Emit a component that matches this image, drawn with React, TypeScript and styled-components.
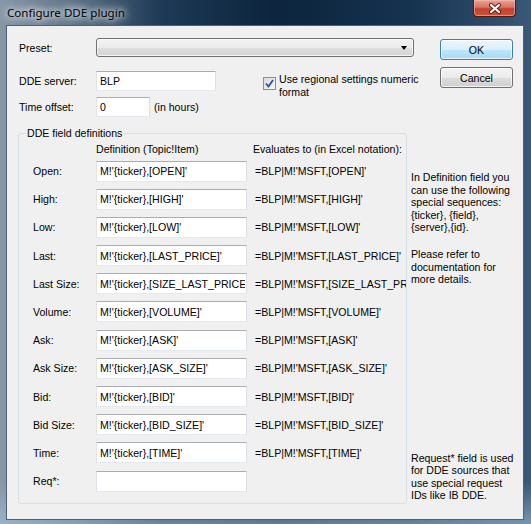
import React from "react";
import styled, { createGlobalStyle } from "styled-components";

const GlobalStyle = createGlobalStyle`
  html, body {
    margin: 0;
    padding: 0;
    background: #1b3550;
  }
  body {
    font-family: "Liberation Sans", Arial, sans-serif;
    font-size: 10.6px;
    color: #000;
  }
`;

const Window = styled.div`
  width: 531px;
  height: 524px;
  display: flex;
  flex-direction: column;
  overflow: hidden;
  background:
    linear-gradient(180deg, rgba(255, 255, 255, 0) 92%, rgba(170, 200, 225, 0.55) 100%),
    linear-gradient(90deg, #8797a6 0%, #5d7286 14%, #1e3a56 30%, #0c243d 52%, #163350 78%, #3a5877 100%);
`;

const TitleBar = styled.div`
  height: 25px;
  flex: 0 0 25px;
  display: flex;
  justify-content: space-between;
  align-items: flex-start;
  padding-left: 7px;
`;

const TitleText = styled.span`
  font-family: "Noto Sans", "Open Sans", sans-serif;
  font-size: 11.6px;
  line-height: 25px;
  color: #000;
  text-shadow: 0 0 6px #fff, 0 0 10px rgba(255, 255, 255, 0.9), 0 0 14px rgba(255, 255, 255, 0.8);
`;

const CloseButton = styled.div`
  width: 43px;
  height: 17px;
  margin-right: 15px;
  box-sizing: border-box;
  border: 1px solid #4b1b14;
  border-top: none;
  border-radius: 0 0 4px 4px;
  background: linear-gradient(180deg, #e7a496 0%, #d8735f 45%, #c2412a 55%, #c9553c 100%);
  box-shadow: inset 0 0 0 1px rgba(255, 200, 190, 0.5);
  display: flex;
  align-items: center;
  justify-content: center;
`;

const Client = styled.div`
  flex: 1;
  margin: 0 7px 4px 6px;
  border: 1px solid #4d6178;
  background: #f0f0f0;
  padding: 12px 0 0 12px;
  display: flex;
  flex-direction: column;
`;

const TopArea = styled.div`
  display: flex;
  align-items: flex-start;
`;

const LeftForm = styled.div`
  width: 395px;
  display: flex;
  flex-direction: column;
`;

const FormRow = styled.div<{ $h: number; $top: number }>`
  display: flex;
  align-items: center;
  height: ${(p) => p.$h}px;
  margin-top: ${(p) => p.$top}px;
`;

const Label = styled.span<{ $w?: number }>`
  width: ${(p) => p.$w ?? 77}px;
  flex: 0 0 auto;
  white-space: nowrap;
`;

const TextBox = styled.input<{ $w: number }>`
  width: ${(p) => p.$w}px;
  height: 100%;
  box-sizing: border-box;
  margin: 0;
  padding: 0 1px 0 3px;
  border: 1px solid;
  border-color: #abadb3 #dbdfe6 #e3e9ef #e2e3ea;
  background: #fff;
  font-family: "Liberation Sans", Arial, sans-serif;
  font-size: 10.6px;
  color: #000;
  outline: none;
`;

const Combo = styled.div`
  width: 318px;
  height: 19px;
  box-sizing: border-box;
  border: 1px solid #707070;
  border-radius: 3px;
  background: linear-gradient(180deg, #f3f3f3 0%, #ebebeb 50%, #dfdfdf 51%, #d4d4d4 100%);
  box-shadow: inset 0 0 0 1px rgba(255, 255, 255, 0.7);
  display: flex;
  align-items: center;
  justify-content: flex-end;
  padding-right: 6px;
`;

const Arrow = styled.div`
  width: 0;
  height: 0;
  border-left: 3.5px solid transparent;
  border-right: 3.5px solid transparent;
  border-top: 4px solid #000;
`;

const CheckGroup = styled.div`
  display: flex;
  align-items: flex-start;
  align-self: flex-start;
  margin-top: 2px;
  margin-left: 47px;
`;

const CheckBox = styled.div`
  width: 13px;
  height: 13px;
  box-sizing: border-box;
  margin-top: 4px;
  border: 1px solid #8f8f8f;
  background: linear-gradient(135deg, #dcdcdc 0%, #f6f6f6 100%);
  display: flex;
  align-items: center;
  justify-content: center;
`;

const CheckText = styled.span`
  width: 150px;
  margin-left: 3px;
  line-height: 12.5px;
`;

const Hint = styled.span`
  margin-left: 4px;
`;

const Buttons = styled.div`
  display: flex;
  flex-direction: column;
  gap: 7px;
  margin-left: 26px;
  margin-top: 1px;
`;

const Button = styled.div<{ $default?: boolean }>`
  width: 73px;
  height: 21px;
  box-sizing: border-box;
  border: 1px solid ${(p) => (p.$default ? "#3c7fb1" : "#707070")};
  border-radius: 3px;
  background: ${(p) =>
    p.$default
      ? "linear-gradient(180deg, #eaf6fd 0%, #d9f0fc 50%, #bee6fd 51%, #a7d9f5 100%)"
      : "linear-gradient(180deg, #f2f2f2 0%, #ebebeb 50%, #dddddd 51%, #cfcfcf 100%)"};
  box-shadow: inset 0 0 0 1px rgba(255, 255, 255, 0.75);
  display: flex;
  align-items: center;
  justify-content: center;
`;

const LowerArea = styled.div`
  display: flex;
  align-items: stretch;
`;

const GroupBox = styled.fieldset`
  margin: 10px 0 0 -1px;
  padding: 0;
  width: 389px;
  height: 377px;
  min-width: 0;
  box-sizing: border-box;
  border: 1px solid #d5dfe5;
  border-radius: 3px;
`;

const GroupLegend = styled.legend`
  margin-left: 7px;
  padding: 0 1px;
  line-height: 12px;
`;

const FieldGrid = styled.div`
  display: grid;
  grid-template-columns: 63px 151px minmax(0, 1fr);
  grid-auto-rows: 21px;
  row-gap: 7.2px;
  align-items: center;
  padding-left: 14px;
`;

const HeaderGrid = styled(FieldGrid)`
  grid-auto-rows: 12px;
  margin-top: 4px;
  margin-bottom: 5.5px;
`;

const HeaderCell = styled.span<{ $pad: number }>`
  padding-left: ${(p) => p.$pad}px;
  white-space: nowrap;
  line-height: 12px;
`;

const EvalCell = styled.span`
  padding-left: 8px;
  white-space: nowrap;
  overflow: hidden;
`;

const HelpColumn = styled.div`
  margin-top: 10px;
  margin-left: 4px;
  height: 377px;
  display: flex;
  flex-direction: column;
  padding-bottom: 2px;
  box-sizing: border-box;
`;

const HelpText = styled.p<{ $top?: number }>`
  margin: ${(p) => (p.$top === undefined ? "auto" : `${p.$top}px`)} 0 0 0;
  line-height: 12.6px;
`;

const fields: Array<[string, string, string]> = [
  ["Open:", "M!'{ticker},[OPEN]'", "=BLP|M!'MSFT,[OPEN]'"],
  ["High:", "M!'{ticker},[HIGH]'", "=BLP|M!'MSFT,[HIGH]'"],
  ["Low:", "M!'{ticker},[LOW]'", "=BLP|M!'MSFT,[LOW]'"],
  ["Last:", "M!'{ticker},[LAST_PRICE]'", "=BLP|M!'MSFT,[LAST_PRICE]'"],
  ["Last Size:", "M!'{ticker},[SIZE_LAST_PRICE]'", "=BLP|M!'MSFT,[SIZE_LAST_PRICE]'"],
  ["Volume:", "M!'{ticker},[VOLUME]'", "=BLP|M!'MSFT,[VOLUME]'"],
  ["Ask:", "M!'{ticker},[ASK]'", "=BLP|M!'MSFT,[ASK]'"],
  ["Ask Size:", "M!'{ticker},[ASK_SIZE]'", "=BLP|M!'MSFT,[ASK_SIZE]'"],
  ["Bid:", "M!'{ticker},[BID]'", "=BLP|M!'MSFT,[BID]'"],
  ["Bid Size:", "M!'{ticker},[BID_SIZE]'", "=BLP|M!'MSFT,[BID_SIZE]'"],
  ["Time:", "M!'{ticker},[TIME]'", "=BLP|M!'MSFT,[TIME]'"],
  ["Req*:", "", ""],
];

export default function App() {
  return (
    <>
      <GlobalStyle />
      <Window>
        <TitleBar>
          <TitleText>Configure DDE plugin</TitleText>
          <CloseButton>
            <svg width="14" height="11" viewBox="0 0 14 11">
              <path d="M3 2 L11 9 M11 2 L3 9" stroke="#5a1a12" strokeWidth="4" strokeLinecap="round" />
              <path d="M3 2 L11 9 M11 2 L3 9" stroke="#fff" strokeWidth="2.2" strokeLinecap="round" />
            </svg>
          </CloseButton>
        </TitleBar>
        <Client>
          <TopArea>
            <LeftForm>
              <FormRow $h={19} $top={0}>
                <Label>Preset:</Label>
                <Combo>
                  <Arrow />
                </Combo>
              </FormRow>
              <FormRow $h={20} $top={14}>
                <Label>DDE server:</Label>
                <TextBox $w={120} value="BLP" readOnly />
                <CheckGroup>
                  <CheckBox>
                    <svg width="9" height="9" viewBox="0 0 9 9">
                      <path d="M1 4.5 L3.5 7.5 L8 1" fill="none" stroke="#2f4f9e" strokeWidth="1.8" />
                    </svg>
                  </CheckBox>
                  <CheckText>Use regional settings numeric format</CheckText>
                </CheckGroup>
              </FormRow>
              <FormRow $h={20} $top={6}>
                <Label>Time offset:</Label>
                <TextBox $w={54} value="0" readOnly />
                <Hint>(in hours)</Hint>
              </FormRow>
            </LeftForm>
            <Buttons>
              <Button $default>OK</Button>
              <Button>Cancel</Button>
            </Buttons>
          </TopArea>
          <LowerArea>
            <GroupBox>
              <GroupLegend>DDE field definitions</GroupLegend>
              <HeaderGrid>
                <span />
                <HeaderCell $pad={0}>Definition (Topic!Item)</HeaderCell>
                <HeaderCell $pad={6}>Evaluates to (in Excel notation):</HeaderCell>
              </HeaderGrid>
              <FieldGrid>
                {fields.map(([label, def, evaluated]) => (
                  <React.Fragment key={label}>
                    <Label $w={63}>{label}</Label>
                    <TextBox $w={151} value={def} readOnly />
                    <EvalCell>{evaluated}</EvalCell>
                  </React.Fragment>
                ))}
              </FieldGrid>
            </GroupBox>
            <HelpColumn>
              <HelpText $top={44}>
                In Definition field you
                <br />
                can use the following
                <br />
                special sequences:
                <br />
                {"{ticker}, {field},"}
                <br />
                {"{server},{id}."}
              </HelpText>
              <HelpText $top={14}>
                Please refer to
                <br />
                documentation for
                <br />
                more details.
              </HelpText>
              <HelpText>
                Request* field is used
                <br />
                for DDE sources that
                <br />
                use special request
                <br />
                IDs like IB DDE.
              </HelpText>
            </HelpColumn>
          </LowerArea>
        </Client>
      </Window>
    </>
  );
}
